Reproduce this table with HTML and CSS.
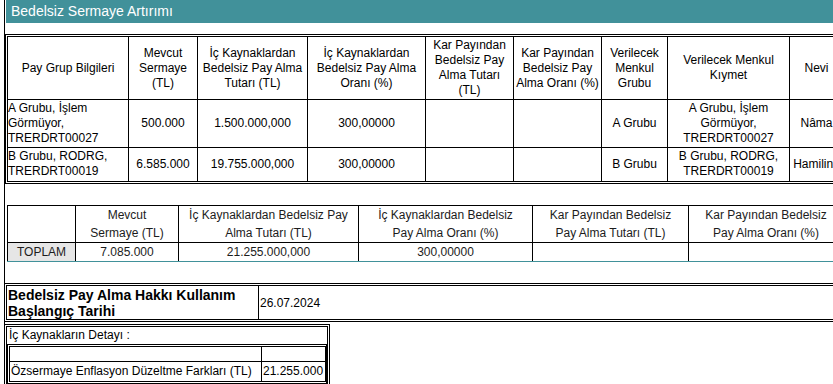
FILE: index.html
```html
<!DOCTYPE html>
<html lang="tr">
<head>
<meta charset="utf-8">
<title>Bedelsiz Sermaye Artırımı</title>
<link rel="stylesheet" href="styles.css">
</head>
<body>
<div class="page">
  <div class="title">Bedelsiz Sermaye Artırımı</div>

  <div class="frame groups">
    <table class="grid t1">
      <colgroup>
        <col class="g1"><col class="g2"><col class="g3"><col class="g4"><col class="g5"><col class="g6"><col class="g7"><col class="g8"><col class="g9">
      </colgroup>
      <tr>
        <td>Pay Grup Bilgileri</td>
        <td>Mevcut<br>Sermaye<br>(TL)</td>
        <td>İç Kaynaklardan<br>Bedelsiz Pay Alma<br>Tutarı (TL)</td>
        <td>İç Kaynaklardan<br>Bedelsiz Pay Alma<br>Oranı (%)</td>
        <td>Kar Payından<br>Bedelsiz Pay<br>Alma Tutarı<br>(TL)</td>
        <td>Kar Payından<br>Bedelsiz Pay<br>Alma Oranı (%)</td>
        <td>Verilecek<br>Menkul<br>Grubu</td>
        <td>Verilecek Menkul<br>Kıymet</td>
        <td>Nevi</td>
      </tr>
      <tr>
        <td class="left">A Grubu, İşlem<br>Görmüyor,<br>TRERDRT00027</td>
        <td>500.000</td>
        <td>1.500.000,000</td>
        <td>300,00000</td>
        <td></td>
        <td></td>
        <td>A Grubu</td>
        <td>A Grubu, İşlem<br>Görmüyor,<br>TRERDRT00027</td>
        <td>Nâma</td>
      </tr>
      <tr class="last">
        <td class="left">B Grubu, RODRG,<br>TRERDRT00019</td>
        <td>6.585.000</td>
        <td>19.755.000,000</td>
        <td>300,00000</td>
        <td></td>
        <td></td>
        <td>B Grubu</td>
        <td>B Grubu, RODRG,<br>TRERDRT00019</td>
        <td>Hamiline</td>
      </tr>
    </table>
  </div>

  <table class="grid totals">
    <colgroup>
      <col class="s1"><col class="s2"><col class="s3"><col class="s4"><col class="s5"><col class="s6">
    </colgroup>
    <tr>
      <td></td>
      <td>Mevcut<br>Sermaye (TL)</td>
      <td>İç Kaynaklardan Bedelsiz Pay<br>Alma Tutarı (TL)</td>
      <td>İç Kaynaklardan Bedelsiz<br>Pay Alma Oranı (%)</td>
      <td>Kar Payından Bedelsiz<br>Pay Alma Tutarı (TL)</td>
      <td>Kar Payından Bedelsiz<br>Pay Alma Oranı (%)</td>
    </tr>
    <tr class="sum">
      <td class="label">TOPLAM</td>
      <td>7.085.000</td>
      <td>21.255.000,000</td>
      <td>300,00000</td>
      <td></td>
      <td></td>
    </tr>
  </table>

  <div class="frame start">
    <table class="grid datebox">
      <colgroup><col class="d1"><col class="d2"></colgroup>
      <tr>
        <td class="strong">Bedelsiz Pay Alma Hakkı Kullanım<br>Başlangıç Tarihi</td>
        <td class="date">26.07.2024</td>
      </tr>
    </table>
  </div>

  <div class="frame detail">
    <div class="box">
      <div class="caption">İç Kaynakların Detayı :</div>
      <div class="frame inner">
        <table class="grid sources">
          <colgroup><col class="e1"><col class="e2"></colgroup>
          <tr class="empty"><td>&nbsp;</td><td>&nbsp;</td></tr>
          <tr class="line"><td>Özsermaye Enflasyon Düzeltme Farkları (TL)</td><td>21.255.000</td></tr>
        </table>
      </div>
    </div>
  </div>
</div>
</body>
</html>
```

FILE: styles.css
```css
html, body {
  margin: 0;
  padding: 0;
  overflow: hidden;
  background: #fff;
}

body {
  width: 833px;
  height: 384px;
  font-family: "Liberation Sans", Arial, sans-serif;
  font-size: 12px;
  color: #000;
}

.page {
  margin-left: 4px;
  border-left: 1px solid #000;
  width: 900px;
  min-height: 400px;
}

.title {
  margin-left: 1px;
  height: 23px;
  line-height: 23px;
  padding-left: 5px;
  background: #41919a;
  color: #fff;
  font-size: 14px;
}

.frame {
  border: 1px solid #000;
  padding: 1px;
  width: max-content;
}

.grid {
  border-collapse: collapse;
  table-layout: fixed;
}

.grid td {
  border: 1px solid #000;
  padding: 1px;
  line-height: 15px;
  text-align: center;
  vertical-align: middle;
}

/* first table */
.groups {
  margin-top: 11px;
}

.t1 { width: 836px; }
.g1 { width: 121px; }
.g2 { width: 69px; }
.g3 { width: 110px; }
.g4 { width: 118px; }
.g5 { width: 88px; }
.g6 { width: 88px; }
.g7 { width: 66px; }
.g8 { width: 122px; }
.g9 { width: 54px; }

.t1 td.left {
  text-align: left;
  padding-left: 0;
}

.t1 .last td {
  padding-bottom: 2px;
}

/* totals */
.totals {
  margin: 21px 0 0 2px;
  width: 836px;
  color: #1c1c1c;
}
.s1 { width: 68px; }
.s2 { width: 103px; }
.s3 { width: 180px; }
.s4 { width: 174px; }
.s5 { width: 156px; }
.s6 { width: 155px; }

.totals td {
  padding: 0;
  line-height: 18px;
}

.totals .sum td {
  border-bottom-color: #41919a;
}

.totals td.label {
  background: #e6e6e6;
}

/* start date */
.start {
  margin: 21px 0 0 -1px;
}

.datebox { width: 837px; }
.d1 { width: 252px; }
.d2 { width: 585px; }

.datebox td {
  text-align: left;
  padding: 1px 1px 0 1px;
}

.datebox td.strong {
  font-size: 14px;
  font-weight: bold;
  line-height: 16px;
}

/* detail */
.detail {
  margin: 2px 0 0 -1px;
  width: 322px;
}

.box {
  border: 1px solid #000;
}

.caption {
  height: 17px;
  line-height: 17px;
  padding-left: 2px;
}

.inner {
  width: auto;
}

.sources { width: 316px; }
.e1 { width: 252px; }
.e2 { width: 64px; }

.sources td {
  text-align: left;
  padding: 0 1px;
}

.sources .empty td {
  line-height: 14px;
}

.sources .line td {
  line-height: 19px;
}
```
